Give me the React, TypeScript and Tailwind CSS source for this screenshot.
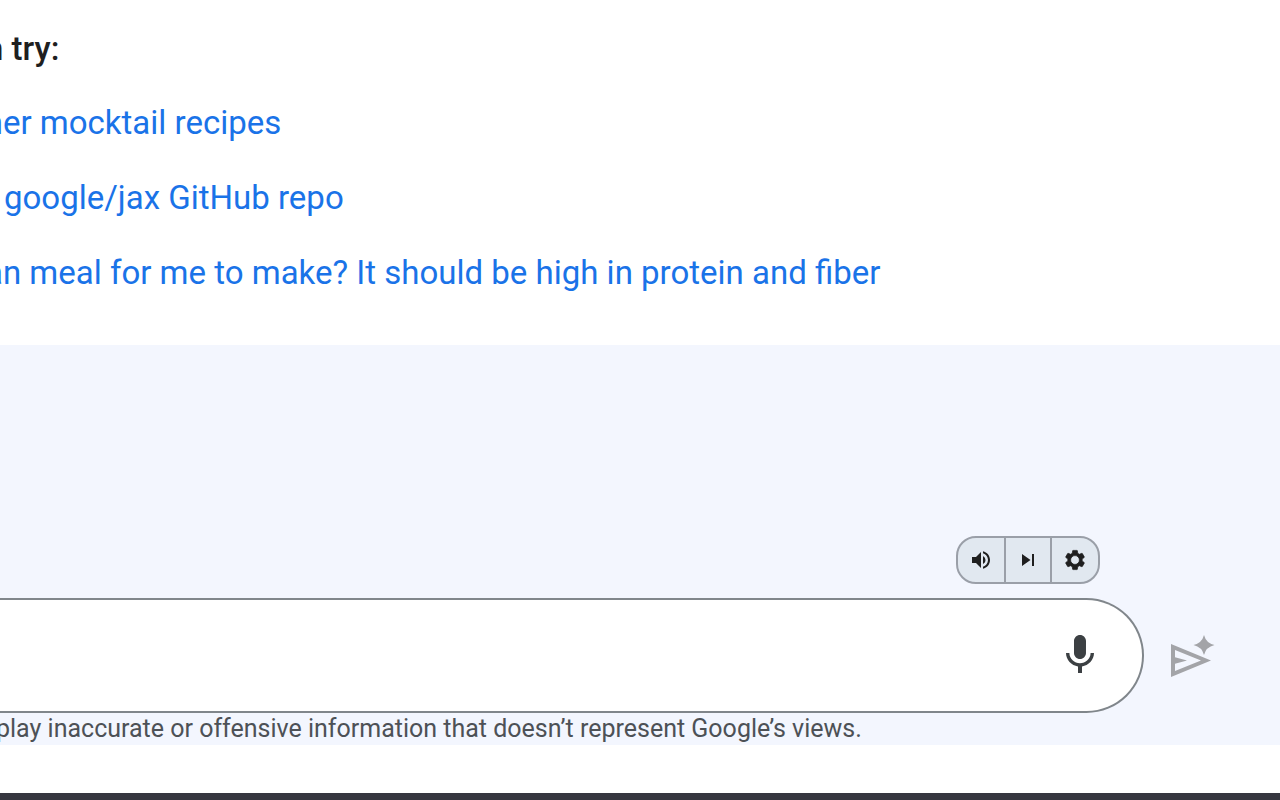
import { useState } from 'react';
import { MdMic, MdSkipNext, MdVolumeUp } from 'react-icons/md';

const suggestions = [
  { text: 'mer mocktail recipes', inset: '-ml-[26px]' },
  { text: 'google/jax GitHub repo', inset: 'ml-1' },
  { text: 'an meal for me to make? It should be high in protein and fiber', inset: '-ml-[15px]' },
];

const GearIcon = ({ size }: { size: number }) => (
  <svg viewBox="0 0 24 24" width={size} height={size} className="fill-current" aria-hidden="true">
    <path
      fillRule="evenodd"
      stroke="currentColor"
      strokeWidth="0.7"
      strokeLinejoin="round"
      d="M19.14 12.94c.04-.3.06-.61.06-.94 0-.32-.02-.64-.07-.94l2.03-1.58c.18-.14.23-.41.12-.61l-1.92-3.32c-.12-.22-.37-.29-.59-.22l-2.39.96c-.5-.38-1.03-.7-1.62-.94l-.36-2.54c-.04-.24-.24-.41-.48-.41h-3.84c-.24 0-.43.17-.47.41l-.36 2.54c-.59.24-1.13.57-1.62.94l-2.39-.96c-.22-.08-.47 0-.59.22L2.74 8.87c-.12.21-.08.47.12.61l2.03 1.58c-.05.3-.09.63-.09.94s.02.64.07.94l-2.03 1.58c-.18.14-.23.41-.12.61l1.92 3.32c.12.22.37.29.59.22l2.39-.96c.5.38 1.03.7 1.62.94l.36 2.54c.05.24.24.41.48.41h3.84c.24 0 .44-.17.47-.41l.36-2.54c.59-.24 1.13-.56 1.62-.94l2.39.96c.22.08.47 0 .59-.22l1.92-3.32c.12-.22.07-.47-.12-.61l-2.01-1.58zM12 16.4a4.4 4.4 0 1 1 0-8.8a4.4 4.4 0 0 1 0 8.8z"
    />
  </svg>
);

const voiceButtons = [
  { label: 'Read aloud', Icon: MdVolumeUp, width: 'w-12' },
  { label: 'Skip', Icon: MdSkipNext, width: 'w-[46px]' },
  { label: 'Voice settings', Icon: GearIcon, width: 'w-[46px]' },
];

const SendIcon = () => (
  <svg viewBox="0 0 48 48" className="size-12 fill-current" aria-hidden="true">
    <path
      fillRule="evenodd"
      d="M3 12L43 28.5L3 45ZM7 18V25.2L19 28.5L7 31.8V39L33 28.5Z"
    />
    {/* keeps a thin gap between the spark and the arrow */}
    <path
      className="stroke-[#f3f6fe]"
      strokeWidth="1"
      paintOrder="stroke"
      d="M36 3Q38 11 46.5 13Q38 15 36 23Q34 15 25.5 13Q34 11 36 3Z"
    />
  </svg>
);

const VoiceToolbar = () => (
  <div className="flex h-12 divide-x-2 divide-[#9a9fa8] overflow-hidden rounded-[20px] border-2 border-[#9a9fa8] bg-[#e1e8f0] text-[#1f1f1f]">
    {voiceButtons.map(({ label, Icon, width }) => (
      <button
        key={label}
        type="button"
        aria-label={label}
        className={`flex items-center justify-center ${width}`}
      >
        <Icon size={24} />
      </button>
    ))}
  </div>
);

export default function App() {
  const [prompt, setPrompt] = useState('');

  return (
    <div className="flex min-h-screen flex-col overflow-hidden bg-white font-['Roboto',sans-serif]">
      <main className="grow pt-[29px] pb-[51px]">
        <h1 className="-ml-[15px] text-[33px] leading-10 font-medium whitespace-nowrap text-[#1f1f1f]">
          n try:
        </h1>
        <ul className="mt-[34px] flex flex-col gap-[35px]">
          {suggestions.map(({ text, inset }) => (
            <li key={text} className={`text-[33px] leading-10 whitespace-nowrap ${inset}`}>
              <a href="#prompt" className="text-[#1a73e8]">
                {text}
              </a>
            </li>
          ))}
        </ul>
      </main>

      <form className="bg-[#f3f6fe] pt-[191px]" onSubmit={(e) => e.preventDefault()}>
        <div className="flex justify-end pr-[180px]">
          <VoiceToolbar />
        </div>
        <div className="mt-3.5 flex items-center pr-16">
          <div className="flex h-[115px] grow items-center rounded-r-full border-2 border-l-0 border-[#80868b] bg-white pr-[38px] pb-0.5">
            <input
              id="prompt"
              aria-label="Prompt"
              value={prompt}
              onChange={(e) => setPrompt(e.target.value)}
              className="h-full min-w-0 grow px-6 text-[33px] outline-none"
            />
            <button type="button" aria-label="Use microphone" className="text-[#3c4043]">
              <MdMic size={48} />
            </button>
          </div>
          <button type="submit" aria-label="Send" className="ml-6 text-[#a3a4a8]">
            <SendIcon />
          </button>
        </div>
        <p className="-ml-1 text-[25px] leading-8 whitespace-nowrap text-[#4d5156]">
          play inaccurate or offensive information that doesn’t represent Google’s views.
        </p>
      </form>

      <footer className="mt-12 h-[7px] bg-[#36373f]" />
    </div>
  );
}
